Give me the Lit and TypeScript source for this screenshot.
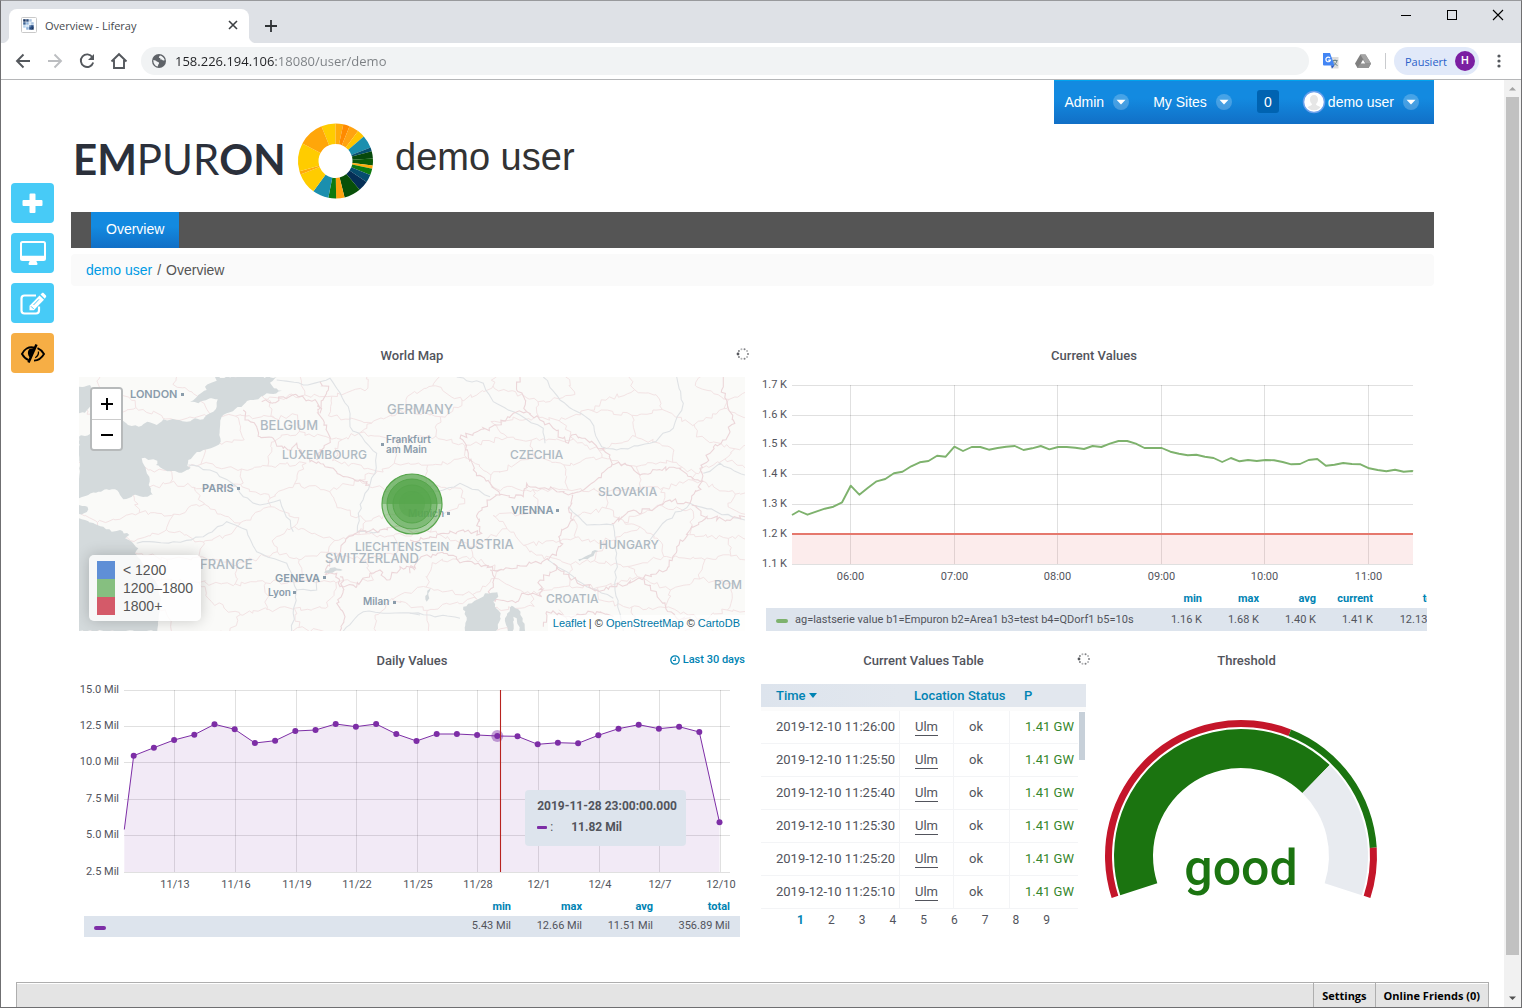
import { LitElement, html, svg, css } from "lit";
import { customElement, state } from "lit/decorators.js";
import { classMap } from "lit/directives/class-map.js";

type Point = [number, number];

const pathOf = (pts: Point[]) => "M" + pts.map(([x, y]) => `${x.toFixed(1)} ${y.toFixed(1)}`).join("L");

const parse = (text: string): Point[] =>
  text.trim().split(/\s+/).map((p) => p.split(",").map(Number) as Point);

/* deterministic noise, so that the map is drawn the same each time */
const noise = (seed: number) => {
  let s = seed * 9301 + 49297;
  return () => {
    s = (s * 9301 + 49297) % 233280;
    return s / 233280 - 0.5;
  };
};

/* breaks a polyline into short wavering steps, like a real border */
const jag = (pts: Point[], seed: number, step: number, amount: number): Point[] => {
  const rnd = noise(seed);
  const out: Point[] = [pts[0]];
  for (let i = 1; i < pts.length; i++) {
    const [ax, ay] = pts[i - 1];
    const [bx, by] = pts[i];
    const n = Math.max(1, Math.round(Math.hypot(bx - ax, by - ay) / step));
    for (let k = 1; k <= n; k++) {
      const t = k / n;
      const a = k === n ? 0 : amount;
      out.push([ax + (bx - ax) * t + rnd() * a, ay + (by - ay) * t + rnd() * a]);
    }
  }
  return out;
};

const WEST = (p: Point): Point => [p[0] / 3 - 9, p[1] / 3 - 7];
const EAST = (p: Point): Point => [p[0] / 3 + 331, p[1] / 3 - 37];
const west = (t: string) => parse(t).map(WEST);
const east = (t: string) => parse(t).map(EAST);

const SEAS: Point[][] = [
  west("435,21 620,21 600,38 612,55 636,62 610,72 590,70 565,88 540,90 520,105 495,118 470,130 455,140 450,170 448,195 452,215 430,232 400,240 375,252 355,270 352,288 362,293 350,300 335,308 315,303 285,300 270,292 258,285 262,272 250,268 235,270 225,263 215,265 222,285 228,300 238,320 236,345 248,374 225,380 190,375 175,385 160,388 150,375 135,358 110,358 85,365 55,375 27,385 27,200 60,192 85,175 105,165 140,155 160,153 185,168 215,167 232,155 260,165 280,148 320,150 350,155 375,145 400,148 410,135 430,125 440,110 443,88 420,85 400,92 385,100 360,95 385,75 410,60 405,50 440,32"),
  west("27,50 60,45 68,80 60,110 45,128 27,130"),
  west("27,405 45,408 55,418 42,430 27,432"),
  west("27,445 45,450 75,462 100,470 125,485 150,480 178,495 165,505 185,515 205,535 195,550 215,575 235,600 260,640 272,690 266,740 262,783 27,783"),
  west("762,608 780,594 795,592 818,600 795,603 775,609"),
  east("165,873 170,840 160,800 185,790 210,775 225,760 245,758 262,757 265,770 250,785 255,800 272,820 268,845 258,873"),
  east("293,873 285,835 305,797 325,808 338,835 345,873 328,873 320,835 310,830 308,873"),
  east("505,658 535,645 555,630 565,633 540,652 508,664"),
  east("62,745 55,760 58,775 50,785 46,768 52,752"),
];

const COUNTRY: Point[][] = [
  west("520,120 525,150 560,170 570,200 610,205 640,235 665,240 680,220 700,260 720,275 745,275"),
  west("575,95 610,98 640,80 680,75 715,90 740,95 750,130"),
  west("750,35 775,60 760,90 745,130 770,165 780,210 750,240 740,270"),
  west("745,275 790,295 820,320 870,330 900,345"),
  west("865,487 820,520 790,570 765,615 800,610 810,650 860,650 900,610 930,600 950,630 990,590 1035,600"),
  west("865,487 930,480 990,470 1030,490"),
  west("810,620 820,660 800,700 825,740 810,783"),
  east("330,111 320,150 345,180 350,215"),
  east("350,215 310,220 260,255 190,280 150,295 175,340 190,390 240,430 270,465 340,470 350,430 420,445 475,465 520,450 575,400 605,375 600,345 560,320 525,295 485,285 475,310 430,265 390,240 350,215"),
  east("605,375 645,370 690,405 740,390 800,385 875,425 840,490 780,480 720,510 650,520 605,550"),
  east("270,465 240,480 200,530 215,580 160,570 100,580 60,590 0,600"),
  east("0,700 30,655 100,640 160,665 280,690 415,660 450,620 455,570 490,540 480,500 485,465"),
  east("440,680 390,720 395,770 340,760 320,785 255,785 235,755 250,730 240,690"),
  east("430,670 500,725 560,750 620,740 700,715 770,690 800,620 840,570 890,530 845,495"),
  east("940,111 935,150 970,240 960,275 900,340 870,385 880,425"),
  east("400,860 410,815 480,830 560,815 610,830"),
  east("700,715 750,780 800,835 860,840"),
  east("890,530 950,540 1005,530"),
];

const RIVERS: Point[][] = [
  west("620,30 700,45 750,35 780,25 800,55 835,110 840,170 885,215 920,250 915,310 885,370 865,430 862,485 930,485"),
  west("355,285 420,300 500,350 520,380 570,405 630,390 670,485"),
  west("200,520 310,515 400,500 470,455 530,480 560,545 650,580 680,660 740,660 745,620"),
  west("680,660 665,783"),
  west("820,783 880,725 960,730 1050,735"),
  east("140,111 220,130 250,185 330,225 400,265 405,310"),
  east("400,111 450,180 540,240 575,320 620,330 720,310 790,265 820,190 800,111"),
  east("0,455 100,450 150,430 240,470"),
  east("475,500 530,555 610,555 620,640 615,750 640,873"),
  east("720,600 770,540 840,490 1005,540"),
  east("415,660 460,690 530,740 610,775"),
  east("0,820 60,825 150,835"),
  east("880,400 930,370 1005,405"),
];

/* provinces: a loose honeycomb with wavering edges */
const provinces = (): string => {
  const rnd = noise(7);
  const cols = 21;
  const rows = 12;
  const grid: Point[][] = [];
  for (let r = 0; r <= rows; r++) {
    const line: Point[] = [];
    for (let c = 0; c <= cols; c++) {
      const lift = (r + c) % 2 ? 4 : -4;
      line.push([c * 33 - 8 + rnd() * 19, r * 24 - 8 + lift + rnd() * 13]);
    }
    grid.push(line);
  }
  let d = "";
  for (let r = 0; r <= rows; r++) {
    for (let c = 0; c <= cols; c++) {
      if (c < cols && rnd() > -0.38) d += pathOf(jag([grid[r][c], grid[r][c + 1]], r * 40 + c, 4, 5));
      if (r < rows && (r + c) % 2) d += pathOf(jag([grid[r][c], grid[r + 1][c]], r * 50 + c + 900, 4, 5));
    }
  }
  return d;
};

const PROVINCES = provinces();

interface MapLabel { text: string; x: number; y: number; size: "s" | "c" | "m" | "l"; city?: boolean; dot?: Point }

const LABELS: MapLabel[] = [
  { text: "LONDON", x: 51, y: 21, size: "c", city: true, dot: [102, 16] },
  { text: "BELGIUM", x: 181, y: 53, size: "l" },
  { text: "GERMANY", x: 308, y: 37, size: "l" },
  { text: "LUXEMBOURG", x: 203, y: 82, size: "m" },
  { text: "Frankfurt", x: 307, y: 66, size: "s", city: true, dot: [302, 66] },
  { text: "am Main", x: 307, y: 76, size: "s", city: true },
  { text: "CZECHIA", x: 431, y: 82, size: "m" },
  { text: "SLOVAKIA", x: 519, y: 119, size: "m" },
  { text: "VIENNA", x: 432, y: 137, size: "c", city: true, dot: [477, 132] },
  { text: "PARIS", x: 123, y: 115, size: "c", city: true, dot: [158, 110] },
  { text: "Munich", x: 329, y: 140, size: "s", city: true, dot: [368, 135] },
  { text: "AUSTRIA", x: 378, y: 172, size: "l" },
  { text: "LIECHTENSTEIN", x: 276, y: 174, size: "m" },
  { text: "SWITZERLAND", x: 246, y: 186, size: "l" },
  { text: "HUNGARY", x: 520, y: 172, size: "m" },
  { text: "FRANCE", x: 121, y: 192, size: "l" },
  { text: "GENEVA", x: 196, y: 205, size: "c", city: true, dot: [244, 199] },
  { text: "Lyon", x: 189, y: 219, size: "s", city: true, dot: [214, 214] },
  { text: "Milan", x: 284, y: 228, size: "s", city: true, dot: [314, 224] },
  { text: "CROATIA", x: 467, y: 226, size: "m" },
  { text: "ROM", x: 635, y: 212, size: "m" },
];

const spinner = html`<svg class="spinner" viewBox="0 0 14 14" role="img" aria-label="loading">
  ${[0, 1, 2, 3, 4, 5, 6, 7, 8, 9].map((i) => {
    const a = (i * Math.PI) / 5 + Math.PI;
    return svg`<circle cx=${7 + 5 * Math.cos(a)} cy=${7 + 5 * Math.sin(a)} r=${i === 0 ? 1.4 : 1} fill="#55575c" opacity=${i === 0 ? 1 : 0.45 + 0.3 * (i % 2)} />`;
  })}
</svg>`;

@customElement("world-map")
class WorldMap extends LitElement {
  static styles = css`
    :host { display: block; position: relative; font-family: "Liberation Sans", Arial, sans-serif; overflow: hidden; }
    .tiles { display: block; width: 100%; height: auto; }
    .name { font-family: Inter, sans-serif; font-weight: 500; fill: #aeb9c2; }
    .city { fill: #8a9cab; font-weight: 600; }
    .s { font-size: 10px; }
    .c { font-size: 11px; }
    .m { font-size: 12px; }
    .l { font-size: 13px; }
    .zoom { position: absolute; top: 10px; left: 11px; border: 2px solid #b7babb; border-radius: 4px; overflow: hidden; display: flex; flex-direction: column; }
    .zoom button { box-sizing: border-box; width: 29px; height: 30px; border: 0; padding: 0; background: #fff; display: grid; place-items: center; cursor: pointer; }
    .zoom button + button { border-top: 1px solid #ccc; }
    .zoom svg { width: 14px; height: 14px; }
    .legend { position: absolute; left: 10px; bottom: 10px; margin: 0; padding: 6px 8px; list-style: none; background: rgba(255,255,255,.8); border-radius: 5px; box-shadow: 0 0 15px rgba(0,0,0,.2); font-size: 14px; line-height: 18px; color: #555; }
    .legend li { display: flex; gap: 8px; }
    .swatch { width: 18px; height: 18px; }
    .blue { background: #5f8fd6; }
    .green { background: #86bf80; }
    .red { background: #d45a69; }
    .credit { position: absolute; right: 0; bottom: 0; padding: 0 5px; background: rgba(255,255,255,.7); font-size: 11px; line-height: 16px; color: #333; white-space: nowrap; }
    .credit a { color: #0078a8; text-decoration: none; }
  `;

  render() {
    return html`
      <svg class="tiles" viewBox="0 0 666 254" role="img" aria-label="Map of central Europe">
        <rect width="666" height="254" fill="#fafaf8" />
        <path d=${PROVINCES} fill="none" stroke="#f3e3e4" stroke-width="1" />
        <g fill="none" stroke="#dfe2e5" stroke-width="1.1">
          ${RIVERS.map((r, i) => svg`<path d=${pathOf(jag(r, i + 30, 6, 3))} />`)}
        </g>
        <g fill="none" stroke="#ecd6d9" stroke-width="1.1">
          ${COUNTRY.map((r, i) => svg`<path d=${pathOf(jag(r, i + 60, 3, 5))} />`)}
        </g>
        <g fill="#d4dadc">
          ${SEAS.map((r, i) => svg`<path d=${pathOf(jag(r, i + 90, 3, 2)) + "Z"} />`)}
        </g>
        ${LABELS.map((l) => svg`
          <text class=${"name " + l.size + (l.city ? " city" : "")} x=${l.x} y=${l.y}>${l.text}</text>
          ${l.dot ? svg`<rect x=${l.dot[0]} y=${l.dot[1]} width="3" height="3" fill="#8a9cab" />` : ""}`)}
        <g fill="#56a64b">
          <circle cx="333" cy="127" r="30" fill-opacity=".5" stroke="#56a64b" stroke-width="1.2" />
          <path d="M303 127a30 30 0 0 1 60 0Z" fill-opacity=".5" />
          <circle cx="333" cy="127" r="25" fill-opacity=".5" stroke="#56a64b" stroke-width="1" />
          <circle cx="333" cy="127" r="19" fill-opacity=".55" stroke="#56a64b" stroke-width="1" />
          <path d="M308 127a25 25 0 0 1 50 0Z" fill-opacity=".5" />
          <circle cx="333" cy="127" r="13" fill-opacity=".5" />
        </g>
      </svg>
      <div class="zoom">
        <button aria-label="Zoom in"><svg viewBox="0 0 14 14"><path d="M7 1v12M1 7h12" stroke="#000" stroke-width="2" /></svg></button>
        <button aria-label="Zoom out"><svg viewBox="0 0 14 14"><path d="M1 7h12" stroke="#000" stroke-width="2" /></svg></button>
      </div>
      <ul class="legend">
        <li><span class="swatch blue"></span>&lt; 1200</li>
        <li><span class="swatch green"></span>1200–1800</li>
        <li><span class="swatch red"></span>1800+</li>
      </ul>
      <div class="credit"><a href="#leaflet">Leaflet</a> | © <a href="#osm">OpenStreetMap</a> © <a href="#carto">CartoDB</a></div>
    `;
  }
}

const CURRENT = [525, 513, 524, 515, 506, 500, 487, 437, 464, 443, 424, 417, 400, 395, 379, 367, 363, 347, 350, 320, 333, 321, 321, 329, 324, 320, 318, 330, 325, 318, 328, 321, 321, 323, 327, 318, 321, 311, 303, 303, 311, 324, 324, 324, 335, 341, 346, 344, 350, 354, 366, 354, 364, 360, 363, 360, 361, 366, 373, 372, 360, 357, 377, 374, 369, 372, 373, 385, 390, 394, 389, 395, 393];
const currentPts: Point[] = CURRENT.map((v, i) => [i === 0 ? 31 : 89.7 + 8.64 * (i - 7), v / 3 - 37]);
currentPts.push([652, 94.5]);

const DAILY = [332, 308, 285, 269, 238, 253, 294, 287, 258, 255, 237, 245, 237, 267, 288, 267, 267, 270, 273, 274, 298, 293, 295, 271, 251, 239, 251, 245, 261, 532];
const dailyDots: Point[] = DAILY.map((v, i) => [54.7 + 20.2 * i, v / 3 - 37]);
const dailyLine: Point[] = [[45.3, 147.5], ...dailyDots];

const chartStyles = css`
  :host { display: block; position: relative; font-family: Roboto, sans-serif; font-size: 11px; color: #52545c; }
  .plot { display: block; width: 100%; height: auto; }
  .plot text { font-size: 11px; fill: #52545c; }
  .end { text-anchor: end; }
  .mid { text-anchor: middle; }
  .grid { stroke: #000; stroke-opacity: .12; stroke-width: 1; }
  .clip { overflow: hidden; margin-left: 5px; }
  table { border-collapse: collapse; table-layout: fixed; }
  th { font-weight: 700; color: #0083b3; text-align: right; padding: 0; line-height: 13px; }
  td { background: #dde4ed; text-align: right; padding: 0; line-height: 13px; white-space: nowrap; }
  .series { text-align: left; }
  .key { display: inline-block; position: relative; top: 1px; width: 12px; height: 4px; border-radius: 2px; margin: 0 7px 0 10px; vertical-align: middle; }
`;

@customElement("current-chart")
class CurrentChart extends LitElement {
  static styles = [chartStyles, css`
    table { width: calc(100% + 18px); }
    th { height: 19px; padding-top: 2px; }
    td { height: 22px; padding-bottom: 1px; }
    .stat { width: 57px; }
    .total { width: 72px; }
    .key { background: #7eb26d; }
  `];

  render() {
    const rows: [number, string][] = [[8, "1.7 K"], [38, "1.6 K"], [67, "1.5 K"], [97, "1.4 K"], [127, "1.3 K"], [157, "1.2 K"], [187, "1.1 K"]];
    const cols: [number, string][] = [[89, "06:00"], [193, "07:00"], [296, "08:00"], [400, "09:00"], [503, "10:00"], [607, "11:00"]];
    return html`
      <svg class="plot" viewBox="0 0 666 210" role="img" aria-label="Current values by hour">
        ${rows.map(([y, t]) => svg`<path class="grid" d=${`M31 ${y + 0.5}H652`} /><text class="end" x="26" y=${y + 3}>${t}</text>`)}
        ${cols.map(([x, t]) => svg`<path class="grid" d=${`M${x + 0.5} 8V187`} /><text class="mid" x=${x + 0.5} y="203">${t}</text>`)}
        <rect x="31" y="157" width="621" height="30" fill="#ea7070" fill-opacity=".13" />
        <path d="M31 157H652" stroke="#e5786d" stroke-width="2" />
        <path d=${pathOf(currentPts)} fill="none" stroke="#7eb26d" stroke-width="1.9" stroke-linejoin="round" />
      </svg>
      <div class="clip">
        <table>
          <colgroup><col /><col class="stat" /><col class="stat" /><col class="stat" /><col class="stat" /><col class="total" /></colgroup>
          <thead><tr><th></th><th>min</th><th>max</th><th>avg</th><th>current</th><th>total</th></tr></thead>
          <tbody><tr><td class="series"><span class="key"></span>ag=lastserie value b1=Empuron b2=Area1 b3=test b4=QDorf1 b5=10s</td><td>1.16 K</td><td>1.68 K</td><td>1.40 K</td><td>1.41 K</td><td>12.13 Mil</td></tr></tbody>
        </table>
      </div>
    `;
  }
}

@customElement("daily-chart")
class DailyChart extends LitElement {
  static styles = [chartStyles, css`
    .clip { margin-right: 5px; }
    table { width: 100%; }
    th { height: 19px; }
    td { height: 18px; padding-bottom: 3px; }
    th:last-child, td:last-child { padding-right: 10px; }
    td.series { padding-bottom: 0; }
    .key { background: #7d2ea6; }
    .stat { width: 71px; }
    .total { width: 87px; }
    .tip { position: absolute; left: 67%; top: 108px; width: 149px; padding: 6px 0 6px 12px; height: 44px; background: #dde4ed; border-radius: 4px; font-size: 12px; font-weight: 700; line-height: 21px; }
    .tip div { display: flex; align-items: center; white-space: nowrap; }
    .dash { width: 10px; height: 3px; border-radius: 1px; background: #7d2ea6; margin-right: 3px; }
    .colon { font-weight: 400; margin-right: 18px; }
  `];

  render() {
    const rows: [number, string][] = [[8, "15.0 Mil"], [44, "12.5 Mil"], [80, "10.0 Mil"], [117, "7.5 Mil"], [153, "5.0 Mil"], [190, "2.5 Mil"]];
    const cols: [number, string][] = [[95, "11/13"], [156, "11/16"], [217, "11/19"], [277, "11/22"], [338, "11/25"], [398, "11/28"], [459, "12/1"], [520, "12/4"], [580, "12/7"], [641, "12/10"]];
    const last = dailyDots[dailyDots.length - 1][0];
    return html`
      <svg class="plot" viewBox="0 0 666 215" role="img" aria-label="Daily values">
        ${rows.map(([y, t]) => svg`<path class="grid" d=${`M45 ${y + 0.5}H651`} /><text class="end" x="40" y=${y + 3}>${t}</text>`)}
        ${cols.map(([x, t]) => svg`<path class="grid" d=${`M${x + 0.5} 8V190`} /><text class="mid" x=${x + 1} y="206">${t}</text>`)}
        <path d=${pathOf(dailyLine) + `L${last} 190L45.3 190Z`} fill="#7d2ea6" fill-opacity=".1" />
        <path d=${pathOf(dailyLine)} fill="none" stroke="#7d2ea6" stroke-width="1" />
        <circle cx=${dailyDots[18][0]} cy=${dailyDots[18][1]} r="6" fill="#7d2ea6" fill-opacity=".45" />
        ${dailyDots.map(([x, y]) => svg`<circle cx=${x} cy=${y} r="3" fill="#7d2ea6" />`)}
        <path d="M421.5 8V190" stroke="#b8231f" stroke-width="1.1" />
      </svg>
      <div class="tip"><div>2019-11-28 23:00:00.000</div><div><span class="dash"></span><span class="colon">:</span>11.82 Mil</div></div>
      <div class="clip">
        <table>
          <colgroup><col /><col class="stat" /><col class="stat" /><col class="stat" /><col class="total" /></colgroup>
          <thead><tr><th></th><th>min</th><th>max</th><th>avg</th><th>total</th></tr></thead>
          <tbody><tr><td class="series"><span class="key"></span></td><td>5.43 Mil</td><td>12.66 Mil</td><td>11.51 Mil</td><td>356.89 Mil</td></tr></tbody>
        </table>
      </div>
    `;
  }
}

@customElement("values-table")
class ValuesTable extends LitElement {
  static styles = css`
    :host { display: block; font-family: Roboto, sans-serif; font-size: 13px; color: #52545c; }
    .scroller { position: relative; }
    table { width: 100%; border-collapse: separate; border-spacing: 0; table-layout: fixed; }
    th { height: 23px; padding: 0 0 0 14px; text-align: left; font-weight: 500; color: #0083b3; background: #e2e7ee; white-space: nowrap; border-bottom: 4px solid #fbfbfb; line-height: 16px; }
    th:first-child { background: linear-gradient(90deg, #dde4ed, #e2e7ee); padding-left: 15px; }
    .caret { width: 8px; height: 5px; margin-left: 3px; vertical-align: 2px; }
    td { height: 32px; padding: 0 0 0 15px; border-bottom: 1px solid #f3f4f6; border-right: 1px solid #f3f4f6; line-height: 16px; white-space: nowrap; }
    .power { color: #37872d; border-right: 0; }
    .gutter { border: 0; padding: 0; }
    td a { display: inline-block; color: inherit; text-decoration: none; border-bottom: 1px solid #52545c; }
    .thumb { position: absolute; right: 1px; top: 28px; width: 6px; height: 48px; background: #c7d0d9; }
    .c1 { width: 139px; } .c2 { width: 54px; } .c3 { width: 56px; } .c5 { width: 8px; }
    nav { display: flex; justify-content: center; }
    nav button { border: 0; background: none; padding: 0 12px; font: 400 12px/22px Roboto, sans-serif; color: #52545c; cursor: pointer; }
    nav .on { color: #0083b3; font-weight: 700; }
  `;
  @state() page = 1;

  render() {
    return html`
      <div class="scroller">
        <table>
          <colgroup><col class="c1" /><col class="c2" /><col class="c3" /><col /><col class="c5" /></colgroup>
          <thead><tr><th>Time<svg class="caret" viewBox="0 0 8 5"><path d="M0 0h8L4 5Z" fill="#0083b3" /></svg></th><th>Location</th><th>Status</th><th colspan="2">P</th></tr></thead>
          <tbody>
            ${["11:26:00", "11:25:50", "11:25:40", "11:25:30", "11:25:20", "11:25:10"].map((t) => html`
              <tr><td>2019-12-10 ${t}</td><td><a href="#ulm">Ulm</a></td><td>ok</td><td class="power">1.41 GW</td><td class="gutter"></td></tr>`)}
          </tbody>
        </table>
        <div class="thumb"></div>
      </div>
      <nav aria-label="Pages">
        ${[1, 2, 3, 4, 5, 6, 7, 8, 9].map((n) => html`<button class=${classMap({ on: n === this.page })} @click=${() => (this.page = n)}>${n}</button>`)}
      </nav>
    `;
  }
}

@customElement("threshold-gauge")
class ThresholdGauge extends LitElement {
  static styles = css`
    :host { display: block; }
    svg { display: block; width: 100%; height: auto; }
    text { font: 500 50px Roboto, sans-serif; fill: #1b7410; text-anchor: middle; }
  `;

  private band(from: number, to: number, outer: number, inner: number) {
    const at = (f: number, r: number) => {
      const a = ((198 - 216 * f) * Math.PI) / 180;
      return `${(151 + r * Math.cos(a)).toFixed(2)} ${(174 - r * Math.sin(a)).toFixed(2)}`;
    };
    const big = (to - from) * 216 > 180 ? 1 : 0;
    return `M${at(from, outer)}A${outer} ${outer} 0 ${big} 1 ${at(to, outer)}L${at(to, inner)}A${inner} ${inner} 0 ${big} 0 ${at(from, inner)}Z`;
  }

  render() {
    return html`
      <svg viewBox="0 0 313 226" role="img" aria-label="Threshold gauge">
        <path d=${this.band(0, 0.6, 136, 129)} fill="#c4162a" />
        <path d=${this.band(0.6, 0.9, 136, 129)} fill="#1b7410" />
        <path d=${this.band(0.9, 1, 136, 129)} fill="#c4162a" />
        <path d=${this.band(0, 0.705, 127, 88)} fill="#1b7410" />
        <path d=${this.band(0.705, 1, 127, 88)} fill="#e8ebf0" />
        <text x="151" y="203">good</text>
      </svg>
    `;
  }
}

/* sectors of the logo wheel: start angle clockwise from the top, and colour */
const WHEEL: [number, string][] = [
  [-22, "#ffcc00"], [0, "#ffab0a"], [12, "#ff8a00"], [22, "#ffa310"], [37, "#ffc400"], [49, "#1b8fae"], [69, "#07506e"], [75, "#06490c"], [86, "#0c5a07"],
  [97, "#ffab0a"], [102, "#0f7a10"], [112, "#064d6e"], [124, "#052f56"], [140, "#085008"], [166, "#ffa310"], [179, "#0f7a10"], [191, "#1b8fae"],
  [216, "#ffcc00"], [249, "#ffab0a"], [254, "#ffcc00"], [298, "#ffa60a"], [338, "#ffcc00"],
];

@customElement("app-root")
class AppRoot extends LitElement {
  static styles = css`
    :host { display: flex; flex-direction: column; min-height: 100vh; box-sizing: border-box; border: 1px solid #6f6f71; border-top-color: #98999c; background: #fff; font-family: "Liberation Sans", Arial, sans-serif; }
    button { font: inherit; border: 0; background: none; padding: 0; cursor: pointer; color: inherit; }
    svg { display: block; }
    a { text-decoration: none; }

    .tabs { display: flex; height: 42px; background: #dee1e6; padding-left: 8px; font-family: "Open Sans", sans-serif; }
    .tab { position: relative; display: flex; align-items: center; box-sizing: border-box; width: 240px; margin-top: 8px; padding: 0 10px 2px 12px; background: #fff; border-radius: 8px 8px 0 0; font-size: 11px; color: #45494d; }
    .tab::before, .tab::after { content: ""; position: absolute; bottom: 0; width: 8px; height: 8px; }
    .tab::before { left: -8px; background: radial-gradient(circle at 0 0, #dee1e6 8px, #fff 9px); }
    .tab::after { right: -8px; background: radial-gradient(circle at 100% 0, #dee1e6 8px, #fff 9px); }
    .tab span { flex: 1; padding-left: 8px; }
    .fav { width: 16px; height: 16px; }
    .tab button svg { width: 12px; height: 12px; }
    .plus { margin: 8px 0 0 14px; }
    .plus svg { width: 16px; height: 16px; }
    .window { margin-left: auto; display: flex; height: 28px; }
    .window button { width: 46px; display: grid; place-items: center; }
    .window svg { width: 12px; height: 12px; }

    .bar { display: flex; align-items: center; height: 36px; padding: 0 14px 0 12px; border-bottom: 1px solid #b5b6b8; font-family: "Open Sans", sans-serif; }
    .nav { display: flex; gap: 12px; margin-right: 12px; }
    .nav svg { width: 20px; height: 20px; }
    .omni { flex: 1; display: flex; align-items: center; gap: 8px; height: 28px; padding: 0 10px; border-radius: 14px; background: #f1f3f4; }
    .omni svg { width: 16px; height: 16px; flex: none; }
    .omni input { flex: 1; border: 0; outline: 0; padding: 0; height: 20px; font: 13px/20px "Open Sans", sans-serif; color: transparent; background: linear-gradient(90deg, #202124 101px, #7b7f83 101px); -webkit-background-clip: text; background-clip: text; }
    .tools { display: flex; align-items: center; padding-left: 14px; }
    .tools svg { width: 16px; height: 16px; }
    .tools .translate { margin-right: 16px; }
    .rule { width: 1px; height: 16px; background: #c9cbce; margin: 0 8px 0 14px; }
    .profile { display: flex; align-items: center; gap: 8px; height: 28px; padding: 0 4px 0 11px; border-radius: 14px; background: #e1e9f9; color: #2a5fc9; font-size: 11px; }
    .profile b { width: 20px; height: 20px; border-radius: 10px; background: #7b1fa2; color: #fff; font: 500 11px/20px Roboto, sans-serif; text-align: center; }
    .tools .more { margin-left: 12px; }

    .view { flex: 1; display: flex; }
    .page { flex: 1; min-width: 0; display: flex; flex-direction: column; }
    .content { display: flex; padding-right: 70px; }
    .side { flex: none; width: 60px; padding: 103px 0 0 10px; display: flex; flex-direction: column; gap: 10px; }
    .side button { width: 43px; height: 40px; border-radius: 4px; background: #47cbf7; display: grid; place-items: center; }
    .side button:last-child { background: #f6ae45; }
    .side svg { width: 28px; height: 26px; }
    .main { flex: 1; min-width: 0; }

    .dock { display: flex; align-items: center; width: fit-content; height: 41px; margin-left: auto; padding: 0 15px 2px 10px; border-top: 1px solid #00a3ee; background: linear-gradient(#138ae0 40%, #116fc6); color: #fff; font-size: 14px; text-shadow: 0 0 1px rgba(255,255,255,.8); }
    .dock button { display: flex; align-items: center; }
    .dock .drop { width: 16px; height: 16px; margin-left: 9px; }
    .sites { margin-left: 24px; }
    .dock .count { width: 22px; height: 23px; border-radius: 3px; background: #0063b1; justify-content: center; margin: 0 23px 0 25px; }
    .dock .face { width: 24px; height: 24px; margin-right: 2px; }

    .brand { display: flex; align-items: center; height: 88px; padding-left: 4px; box-sizing: border-box; padding-bottom: 14px; }
    .logo { width: 300px; height: 76px; }
    .logo text { font: 400 42px Lato, sans-serif; fill: #2b303b; }
    .logo .heavy { font-weight: 700; }
    .logo .lite { font-weight: 400; }
    h1 { margin: 0 0 8px 20px; font-size: 38px; line-height: 44px; font-weight: 400; color: #333; }

    .menu { height: 36px; background: #555; padding-left: 20px; display: flex; }
    .menu a { padding: 0 15px; line-height: 34px; color: #fff; font-size: 14px; background: linear-gradient(#138ae0 40%, #116fc6); }
    .crumbs { margin-top: 6px; padding: 0 15px; line-height: 32px; background: #fafafa; border-radius: 4px; font-size: 14px; color: #555; display: flex; gap: 5px; }
    .crumbs a { color: #009ae5; }

    .dash { display: grid; grid-template-columns: 1fr 1fr; gap: 14px 16px; padding: 54px 7px 0 8px; }
    .panel { min-width: 0; }
    .panel header { position: relative; display: flex; justify-content: center; margin-bottom: 5px; }
    .panel h2 { margin: 0; font: 500 13px/32px Roboto, sans-serif; color: #52545c; }
    .badge { position: absolute; right: -5px; top: 7px; }
    .spinner { width: 14px; height: 14px; }
    .range { position: absolute; right: 0; top: 0; display: flex; align-items: center; gap: 3px; font: 500 11px/30px Roboto, sans-serif; color: #0083b3; }
    .range svg { width: 10px; height: 10px; }
    .pair { display: grid; grid-template-columns: 325px 1fr; gap: 4px; min-width: 0; }
    .cell header { margin-bottom: 7px; }
    .gauge { padding-right: 24px; }

    .foot { display: flex; margin: auto 15px 0; height: 24px; border: 1px solid #aeaeae; border-bottom: 0; background: #e4e4e4; box-shadow: inset 0 1px #fff; justify-content: flex-end; font: 700 11px/23px "Open Sans", sans-serif; color: #000; }
    .foot button { padding: 0 8px; border-left: 1px solid #aeaeae; }

    .scroll { flex: none; width: 17px; background: #f1f1f1; display: flex; flex-direction: column; }
    .scroll svg { width: 17px; height: 17px; flex: none; }
    .grip { width: 13px; margin: 0 2px; background: #c1c1c1; flex: 858; }
    .rest { flex: 35; }
  `;

  private drop = html`<svg class="drop" viewBox="0 0 16 16"><circle cx="8" cy="8" r="8" fill="#fff" fill-opacity=".22" /><path d="M3.5 5.8h9L8 10.5Z" fill="#fff" /></svg>`;

  private wheel() {
    return WHEEL.map(([start, fill], i) => {
      const end = i + 1 < WHEEL.length ? WHEEL[i + 1][0] : 338;
      if (end <= start) return "";
      const at = (deg: number, r: number) => {
        const a = (deg * Math.PI) / 180;
        return `${(260.5 + r * Math.sin(a)).toFixed(2)} ${(38 - r * Math.cos(a)).toFixed(2)}`;
      };
      return svg`<path fill=${fill} d=${`M${at(start, 37.5)}A37.5 37.5 0 0 1 ${at(end, 37.5)}L${at(end, 17)}A17 17 0 0 0 ${at(start, 17)}Z`} />`;
    });
  }

  private favicon() {
    const cells: [number, number, string][] = [[3, 3, "#16335f"], [6, 3, "#2c4d7c"], [3, 6, "#3d6494"], [9, 3, "#a8c3e0"], [3, 9, "#b5d3ee"], [6, 6, "#8fb4dc"], [9, 6, "#d8e8f5"], [6, 9, "#cfe3f5"], [9, 9, "#5a80b0"], [11, 6, "#a8c3e0"], [11, 9, "#254a80"], [11, 11, "#16335f"], [9, 11, "#254a80"], [6, 11, "#8fb4dc"]];
    return html`<svg class="fav" viewBox="0 0 16 16"><rect x=".5" y=".5" width="15" height="15" rx="1" fill="#fff" stroke="#c9c9c9" />${cells.map(([x, y, f]) => svg`<rect x=${x - 0.8} y=${y - 0.8} width="2.5" height="2.5" fill=${f} />`)}</svg>`;
  }

  render() {
    return html`
      <div class="tabs">
        <div class="tab">${this.favicon()}<span>Overview - Liferay</span>
          <button aria-label="Close tab"><svg viewBox="0 0 12 12"><path d="M2 2l8 8M10 2l-8 8" stroke="#3c4043" stroke-width="1.6" /></svg></button>
        </div>
        <button class="plus" aria-label="New tab"><svg viewBox="0 0 16 16"><path d="M8 2v12M2 8h12" stroke="#2f3235" stroke-width="1.8" /></svg></button>
        <div class="window">
          <button aria-label="Minimize"><svg viewBox="0 0 12 12"><path d="M1 6.5h10" stroke="#000" /></svg></button>
          <button aria-label="Maximize"><svg viewBox="0 0 12 12"><rect x="1.5" y="1.5" width="9" height="9" fill="none" stroke="#000" /></svg></button>
          <button aria-label="Close"><svg viewBox="0 0 12 12"><path d="M1 1l10 10M11 1L1 11" stroke="#000" stroke-width="1.1" /></svg></button>
        </div>
      </div>

      <div class="bar">
        <div class="nav">
          <button aria-label="Back"><svg viewBox="0 0 20 20" fill="none" stroke="#54585d" stroke-width="1.9"><path d="M17 10H4M10.5 3.5L4 10l6.5 6.5" /></svg></button>
          <button aria-label="Forward"><svg viewBox="0 0 20 20" fill="none" stroke="#bcbec1" stroke-width="1.9"><path d="M3 10h13M9.5 3.5L16 10l-6.5 6.5" /></svg></button>
          <button aria-label="Reload"><svg viewBox="0 0 20 20"><path d="M15.4 6.2A6.3 6.3 0 1 0 16.2 11.5" fill="none" stroke="#54585d" stroke-width="1.9" /><path d="M17 3v6h-6Z" fill="#54585d" /></svg></button>
          <button aria-label="Home"><svg viewBox="0 0 20 20" fill="none" stroke="#54585d" stroke-width="1.9"><path d="M2.5 10.5L10 3.2l7.5 7.3M5 9v8h10V9" /></svg></button>
        </div>
        <div class="omni">
          <svg viewBox="0 0 16 16"><circle cx="8" cy="8" r="7" fill="#5f6368" /><path d="M9 2.5C11 3 13 4.5 13.7 7c-1 1-2 .5-3-.5-1.5.3-2-.6-1.2-1.5-1 .2-2-.4-1.5-1.300ZM2.300 7c1.500.2 3.200.6 3.500 1.600.8.600 2 .2 2.200 1.500.2 1-1 1.300-1 2.400 0 .7-.4 1-.8 1C4 12.700 2.200 10.500 2.300 7Z" fill="#f1f3f4" /></svg>
          <input aria-label="Address" .value=${"158.226.194.106:18080/user/demo"} />
        </div>
        <div class="tools">
          <svg class="translate" viewBox="0 0 16 16"><path d="M6 4h9.5v11.5H8Z" fill="#dcdcdc" /><path d="M9.5 7.5h5M12 6.500v1M14 7.500c-.5 2.500-2 4-4 5M10.500 8.500c.5 1.500 2 3 4 4" stroke="#6b8589" fill="none" stroke-width="1" /><path d="M0 0h7l4.500 12.500H1a1 1 0 0 1-1-1Z" fill="#4285f4" /><path d="M8 12.500h3.500L9 15.500Z" fill="#2456c4" /><path d="M7 5a2.300 2.300 0 1 0 .4 2.200H5.200" stroke="#fff" fill="none" stroke-width="1.200" /></svg>
          <svg viewBox="0 0 16 16"><path d="M5.300 1.500h5.200L16 10.500l-2.500 4.500h-11L0 10.500Z" fill="#7f7f7f" /><path d="M5.300 1.500h5.200L16 10.500h-5.200Z" fill="#a4a4a4" /><path d="M5.300 10.500H16l-2.500 4.500h-11Z" fill="#949494" /><path d="M8 6.800l2.300 3.700H5.800Z" fill="#fff" /></svg>
          <div class="rule"></div>
          <button class="profile">Pausiert<b>H</b></button>
          <button class="more" aria-label="Menu"><svg viewBox="0 0 16 16" fill="#54585d"><circle cx="8" cy="3" r="1.600" /><circle cx="8" cy="8" r="1.600" /><circle cx="8" cy="13" r="1.600" /></svg></button>
        </div>
      </div>

      <div class="view">
        <div class="page">
          <div class="content">
            <aside class="side">
              <button aria-label="Add"><svg viewBox="0 0 28 26"><path d="M11.500 3.500h4a1 1 0 0 1 1 1v5.500h6a1 1 0 0 1 1 1v4a1 1 0 0 1-1 1h-6v6a1 1 0 0 1-1 1h-4a1 1 0 0 1-1-1v-6h-6a1 1 0 0 1-1-1v-4a1 1 0 0 1 1-1h6v-5.500a1 1 0 0 1 1-1Z" fill="#fff" /></svg></button>
              <button aria-label="Preview"><svg viewBox="0 0 28 26"><path fill-rule="evenodd" d="M4 1h20.500A2.500 2.500 0 0 1 27 3.500v15A2.500 2.500 0 0 1 24.500 21h-7c0 1.500 1 1.800 1 3 0 .6-.4.900-1 .9h-7c-.6 0-1-.3-1-.9 0-1.200 1-1.500 1-3H3.500A2.500 2.500 0 0 1 1 18.500v-15A2.500 2.500 0 0 1 3.500 1ZM3.600 3a.6.600 0 0 0-.6.600V15.700h22V3.600a.6.600 0 0 0-.6-.6Z" fill="#fff" /></svg></button>
              <button aria-label="Edit"><svg viewBox="0 0 28 26"><path d="M17 5.500H5.500A3 3 0 0 0 2.500 8.500v12A3 3 0 0 0 5.500 23.500H17a3 3 0 0 0 3-3V16.500" fill="none" stroke="#fff" stroke-width="2.200" /><path d="M20.500 5.500l4.500 4.300-10.200 10.500H10.500v-4.500ZM21.500 4.500l1.300-1.300c.6-.6 1.400-.6 2 0l2 2c.6.600.6 1.400 0 2L25.800 8.700Z" fill="#fff" /><path d="M12 16.300l2.600 2.600M14.500 15l5.500-5.700" stroke="#47cbf7" stroke-width="1" /></svg></button>
              <button aria-label="Hide controls"><svg viewBox="0 0 28 26" fill="none" stroke="#000" stroke-width="1.900"><path d="M15.500 7.700C9.500 6 5 9.500 3 14c1.600 2.800 3.800 5 6.600 6.100M18.500 8.200c2.800 1.200 5 3.200 6.500 5.800-2.300 4-5.600 6.400-10 6.600" /><path d="M17.500 4.500L9.500 22.500" stroke-width="2.500" /><path d="M10.500 9C8 11.500 8.700 15.500 11 17.500l4.500-9.500Z" fill="#000" stroke="none" /><path d="M19.500 11.500c.2 2.800-1 4.800-3.300 6.200" stroke-width="1.300" /></svg></button>
            </aside>

            <div class="main">
              <div class="dock">
                <button>Admin${this.drop}</button>
                <button class="sites">My Sites${this.drop}</button>
                <button class="count">0</button>
                <button>
                  <svg class="face" viewBox="0 0 24 24"><circle cx="12" cy="12" r="10.500" fill="#fff" stroke="#6aa0ec" stroke-width="1.500" /><path d="M12 5c2.500 0 4 1.800 4 4.500S14.500 13.500 14 14c0 2 3 1.500 4.500 3.500A9 9 0 0 1 5.500 17.500C7 15.500 10 16 10 14c-.5-.5-2-1.500-2-4.500S9.500 5 12 5Z" fill="#e6e6e6" /></svg>
                  demo user${this.drop}
                </button>
              </div>

              <div class="brand">
                <svg class="logo" viewBox="0 0 300 76" role="img" aria-label="Empuron">
                  <text x="-2" y="52"><tspan class="heavy">EM</tspan><tspan class="lite">PUR</tspan><tspan class="heavy">ON</tspan></text>
                  ${this.wheel()}
                </svg>
                <h1>demo user</h1>
              </div>

              <nav class="menu"><a href="#overview">Overview</a></nav>
              <nav class="crumbs"><a href="#demo">demo user</a><span>/</span><span>Overview</span></nav>

              <div class="dash">
                <section class="panel">
                  <header><h2>World Map</h2><span class="badge">${spinner}</span></header>
                  <world-map></world-map>
                </section>
                <section class="panel">
                  <header><h2>Current Values</h2></header>
                  <current-chart></current-chart>
                </section>
                <section class="panel">
                  <header><h2>Daily Values</h2>
                    <button class="range"><svg viewBox="0 0 10 10" fill="none" stroke="#0083b3" stroke-width="1.300"><circle cx="5" cy="5" r="4.200" /><path d="M5.300 2.500v3H3" stroke-width="1.100" /></svg>Last 30 days</button>
                  </header>
                  <daily-chart></daily-chart>
                </section>
                <div class="pair">
                  <section class="panel cell">
                    <header><h2>Current Values Table</h2><span class="badge">${spinner}</span></header>
                    <values-table></values-table>
                  </section>
                  <section class="panel gauge">
                    <header><h2>Threshold</h2></header>
                    <threshold-gauge></threshold-gauge>
                  </section>
                </div>
              </div>
            </div>
          </div>

          <div class="foot"><button>Settings</button><button>Online Friends (0)</button></div>
        </div>
        <div class="scroll">
          <svg viewBox="0 0 17 17"><path d="M5 10.500h7L8.500 7Z" fill="#a3a3a3" /></svg>
          <div class="grip"></div><div class="rest"></div>
          <svg viewBox="0 0 17 17"><path d="M5 6.500h7L8.500 10Z" fill="#505050" /></svg>
        </div>
      </div>
    `;
  }
}
